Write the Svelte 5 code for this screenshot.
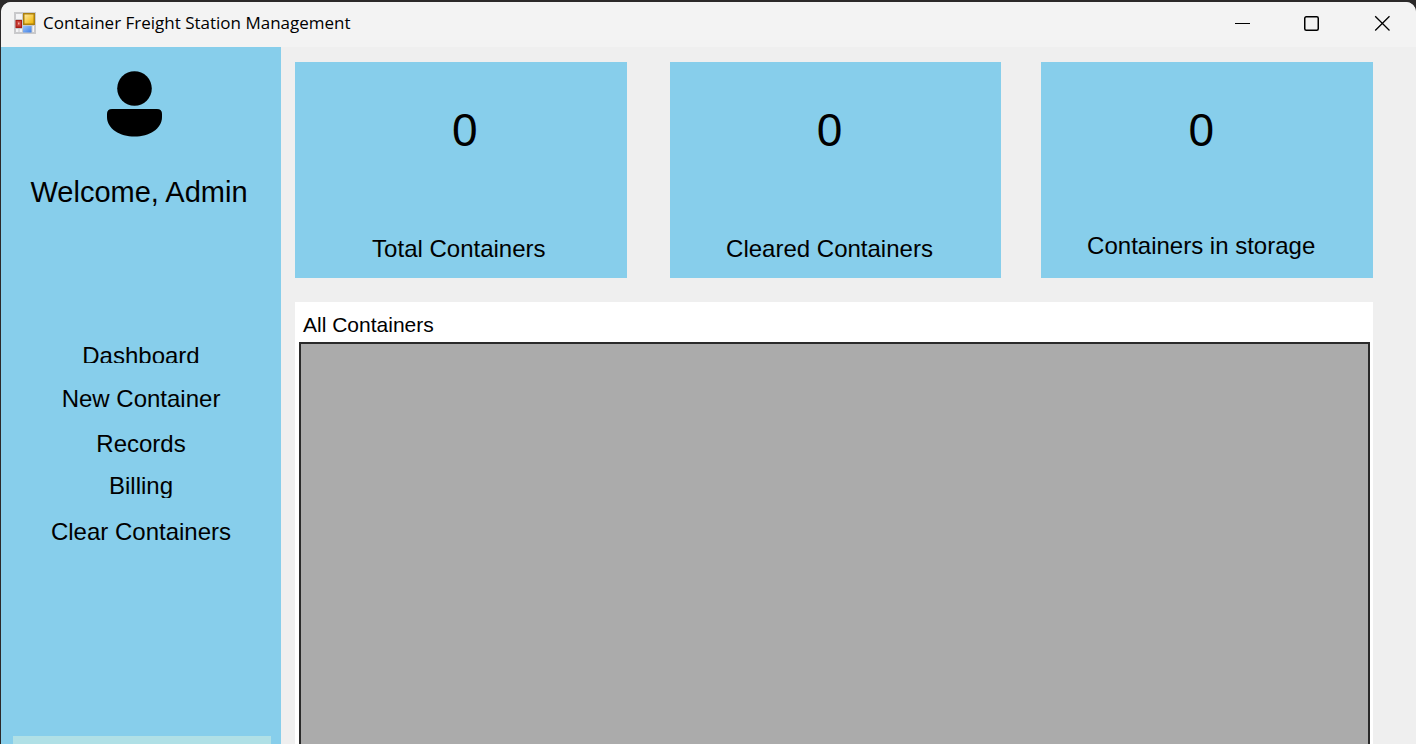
<script>
  const menu = [
    { label: 'Dashboard', size: 'short' },
    { label: 'New Container', size: 'tall' },
    { label: 'Records', size: 'medium' },
    { label: 'Billing', size: 'snug' },
    { label: 'Clear Containers', size: 'tall' }
  ];

  const stats = [
    { id: 'total', label: 'Total Containers', value: 0 },
    { id: 'cleared', label: 'Cleared Containers', value: 0 },
    { id: 'storage', label: 'Containers in storage', value: 0 }
  ];
</script>

<div class="desktop">
  <div class="window">
    <header class="titlebar">
      <svg class="app-icon" viewBox="0 0 22 22" aria-hidden="true">
        <defs>
          <linearGradient id="gold" x1="0" y1="0" x2="1" y2="1">
            <stop offset="0" stop-color="#ffe9a0" />
            <stop offset="1" stop-color="#f0b400" />
          </linearGradient>
          <linearGradient id="blue" x1="0" y1="0" x2="1" y2="1">
            <stop offset="0" stop-color="#9cc4fa" />
            <stop offset="1" stop-color="#3f7fe4" />
          </linearGradient>
        </defs>
        <rect width="22" height="22" fill="#c9c9cb" />
        <rect x="2" y="2" width="6" height="5" fill="#f4f4f6" />
        <rect x="2" y="17" width="2.500" height="3" fill="#f4f4f6" />
        <rect x="5.500" y="17" width="2.500" height="3" fill="#f4f4f6" />
        <rect x="18.500" y="14" width="1.500" height="6" fill="#f4f4f6" />
        <rect x="1.500" y="8" width="6.500" height="8" fill="#a91c16" />
        <rect x="2.500" y="9" width="4.500" height="5.500" fill="#cb4038" />
        <rect x="4" y="10.500" width="1.500" height="2" fill="#f3b0a8" />
        <rect x="9" y="1" width="12" height="12" fill="#ad800c" />
        <rect x="10.500" y="2.500" width="9" height="9" fill="url(#gold)" />
        <rect x="9" y="14" width="8.500" height="6.500" fill="url(#blue)" />
      </svg>
      <h1>Container Freight Station Management</h1>
      <div class="controls">
        <button aria-label="Minimize">
          <svg viewBox="0 0 16 16"><path d="M1 8.500H16" stroke="#000" /></svg>
        </button>
        <button aria-label="Maximize">
          <svg viewBox="0 0 16 16"><rect x=".750" y="1.750" width="13.500" height="13.500" rx="1.500" fill="none" stroke="#000" stroke-width="1.500" /></svg>
        </button>
        <button aria-label="Close">
          <svg viewBox="0 0 16 16"><path d="M1.200 1.200L15.500 15.500M15.500 1.200L1.200 15.500" stroke="#000" stroke-width="1.300" /></svg>
        </button>
      </div>
    </header>

    <div class="body">
      <aside>
        <svg class="avatar" viewBox="0 0 56 66" aria-hidden="true">
          <circle cx="27.500" cy="17.500" r="17.300" />
          <path d="M5 38H50Q55 38 55 43V46C55 58 42 65.500 27.500 65.500S0 58 0 46V43Q0 38 5 38Z" />
        </svg>
        <p class="welcome">Welcome, Admin</p>
        <nav>
          {#each menu as item}
            <button class={item.size}>{item.label}</button>
          {/each}
        </nav>
        <div class="footer"></div>
      </aside>

      <main>
        <section class="stats">
          {#each stats as stat}
            <article class={stat.id}>
              <span class="value">{stat.value}</span>
              <span class="caption">{stat.label}</span>
            </article>
          {/each}
        </section>
        <section class="records">
          <h2>All Containers</h2>
          <div class="grid"></div>
        </section>
      </main>
    </div>
  </div>
</div>

<style>
  :global(body) {
    margin: 0;
    background: #000;
  }

  .desktop {
    box-sizing: border-box;
    height: 100vh;
    padding: 2px 0 0 1px;
    background: #2b2929;
    font-family: 'Liberation Sans', Arial, sans-serif;
    color: #000;
  }

  .window {
    display: flex;
    flex-direction: column;
    height: 100%;
    overflow: hidden;
    border-radius: 10px 10px 0 0;
    background: #efefef;
  }

  .titlebar {
    box-sizing: border-box;
    display: flex;
    flex: none;
    align-items: center;
    height: 45px;
    padding: 0 0 3px 13px;
    background: #f3f3f3;
  }

  .app-icon {
    width: 22px;
    height: 22px;
    margin-right: 7px;
  }

  h1 {
    margin: 0;
    font: 400 17px/24px 'Segoe UI', 'Open Sans', sans-serif;
    white-space: nowrap;
  }

  .controls {
    display: flex;
    height: 100%;
    margin: 0 -1px 0 auto;
  }

  button {
    padding: 0;
    border: 0;
    background: none;
    color: inherit;
    font: inherit;
  }

  .controls button {
    display: grid;
    width: 70px;
    place-items: center;
  }

  .controls svg {
    width: 16px;
    height: 16px;
  }

  .body {
    display: flex;
    flex: 1;
    min-height: 0;
  }

  aside {
    box-sizing: border-box;
    display: flex;
    flex: none;
    flex-direction: column;
    width: 280px;
    padding: 24px 10px 0 12px;
    background: #87ceeb;
  }

  .avatar {
    width: 56px;
    height: 66px;
    margin-left: 94px;
  }

  .welcome {
    margin: 38px 0 0;
    padding-right: 6px;
    font-size: 29px;
    line-height: 34px;
    text-align: center;
    white-space: nowrap;
  }

  nav {
    display: flex;
    flex-direction: column;
    margin-top: 133px;
    padding-right: 2px;
  }

  nav button {
    display: flex;
    justify-content: center;
    align-items: flex-start;
    height: 28px;
    overflow: hidden;
    font-size: 24px;
    line-height: 28px;
    white-space: nowrap;
  }

  nav .short {
    height: 21px;
    margin-bottom: 22px;
  }

  nav .tall {
    margin-bottom: 17px;
  }

  nav .medium {
    margin-bottom: 14px;
  }

  nav .snug {
    height: 26px;
    margin-bottom: 20px;
  }

  .footer {
    height: 8px;
    margin-top: auto;
    background: #b0e0e6;
  }

  main {
    display: flex;
    flex: 1;
    flex-direction: column;
    min-width: 0;
    padding: 15px 43px 0 14px;
  }

  .stats {
    display: flex;
    gap: 40px;
  }

  article {
    box-sizing: border-box;
    display: flex;
    flex: 1 1 240px;
    flex-direction: column;
    justify-content: space-between;
    align-items: center;
    height: 216px;
    padding: 42px 12px 15px 0;
    background: #87ceeb;
  }

  .total {
    margin-right: 3px;
    padding-right: 4px;
  }

  .total .value {
    padding-left: 12px;
  }

  .storage {
    padding-bottom: 18px;
  }

  .value {
    font-size: 46px;
    line-height: 52px;
  }

  .caption {
    font-size: 24px;
    line-height: 28px;
    white-space: nowrap;
  }

  .records {
    display: flex;
    flex: 1;
    flex-direction: column;
    margin-top: 24px;
    padding: 0 3px 0 4px;
    background: #fff;
  }

  h2 {
    margin: 0;
    padding: 11px 0 5px 4px;
    font-size: 21px;
    font-weight: 400;
    line-height: 24px;
  }

  .grid {
    flex: 1;
    border: 2px solid #2a2a2a;
    border-bottom: 0;
    background: #ababab;
  }
</style>
